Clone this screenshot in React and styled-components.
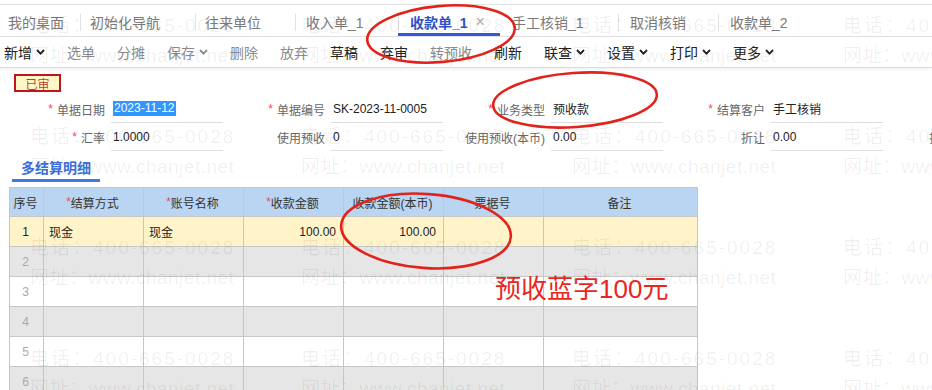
import React from 'react';
import styled, { createGlobalStyle } from 'styled-components';

const FONT = `"Liberation Sans", "Noto Sans CJK SC", sans-serif`;

const GlobalStyle = createGlobalStyle`
  html, body { margin: 0; padding: 0; background: #fff; }
  body { font-family: ${FONT}; overflow: hidden; }
  * { box-sizing: border-box; }
`;

const Page = styled.div`
  position: relative;
  width: 932px;
  height: 390px;
  overflow: hidden;
  background: #fff;
`;

const TabBar = styled.div`
  display: flex;
  margin-top: 4px;
  height: 33px;
  border-top: 1px solid #e3e3e3;
  border-bottom: 1px solid #e3e3e3;
`;

const Tab = styled.div`
  position: relative;
  flex: 0 0 ${(p) => p.$w}px;
  height: 31px;
  padding: 5px 0 0 ${(p) => p.$pad}px;
  display: flex;
  align-items: center;
  gap: 8px;
  font-size: 14px;
  white-space: nowrap;
  color: ${(p) => (p.$active ? '#2f52c8' : '#7a7a7a')};
  font-weight: ${(p) => (p.$active ? 'bold' : 'normal')};
  border-bottom: 3px solid ${(p) => (p.$active ? '#3a58d6' : 'transparent')};
  &::before {
    content: '';
    display: ${(p) => (p.$sep ? 'block' : 'none')};
    position: absolute;
    left: 0;
    top: 9px;
    width: 1px;
    height: 17px;
    background: #e2e2e2;
  }
`;

const Close = styled.span`
  font-size: 16px;
  font-weight: normal;
  color: #aaa;
`;

const Toolbar = styled.div`
  display: flex;
  align-items: center;
  gap: 22px;
  height: 31px;
  padding-left: 4px;
  border-bottom: 1px solid #dcdcdc;
  box-shadow: 0 1px 3px rgba(0, 0, 0, 0.08);
`;

const ToolItem = styled.div`
  display: flex;
  align-items: center;
  gap: 4px;
  font-size: 14px;
  white-space: nowrap;
  color: ${(p) => (p.$disabled ? '#8a8a8a' : '#222')};
`;

const Chevron = () => (
  <svg width="9" height="6" viewBox="0 0 9 6">
    <polyline points="1,1 4.5,4.6 8,1" fill="none" stroke="currentColor" strokeWidth="1.8" />
  </svg>
);

const Badge = styled.div`
  margin: 6px 0 0 14px;
  width: 47px;
  height: 18px;
  border: 2px solid #c2141b;
  background: #fff7c8;
  color: #b8432f;
  font-size: 12px;
  display: flex;
  align-items: center;
  justify-content: center;
`;

const Form = styled.div`
  margin-top: 3px;
  display: flex;
  flex-direction: column;
`;

const FormRow = styled.div`
  display: flex;
  height: 28px;
  padding-left: 3px;
`;

const Field = styled.div`
  flex: 0 0 220px;
  display: flex;
`;

const Label = styled.div`
  flex: 0 0 102px;
  display: flex;
  align-items: center;
  justify-content: flex-end;
  font-size: 12px;
  color: #666;
  white-space: nowrap;
`;

const Star = styled.span`
  color: #e5505a;
  margin-right: 4px;
`;

const Value = styled.div`
  flex: 0 0 112px;
  margin-left: 6px;
  padding-left: 2px;
  display: flex;
  align-items: center;
  border-bottom: 1px solid #dedede;
  font-size: 12px;
  color: #222;
  white-space: nowrap;
`;

const Selected = styled.span`
  background: #3196fd;
  color: #fff;
  line-height: 15px;
  padding: 0 1px;
`;

const SectionTab = styled.div`
  margin: 6px 0 0 12px;
  width: 88px;
  height: 25px;
  line-height: 22px;
  text-align: center;
  font-size: 14px;
  font-weight: bold;
  color: #3b6fd6;
  border-bottom: 3px solid #3d7be0;
`;

const Table = styled.div`
  margin: 5px 0 0 9px;
  width: 689px;
  border-left: 1px solid #c6c6c6;
  border-top: 1px solid #c6c6c6;
`;

const Row = styled.div`
  display: grid;
  grid-template-columns: 34px 100px 100px 100px 100px 100px 154px;
  height: ${(p) => (p.$head ? 29 : 30)}px;
  background: ${(p) => p.$bg};
`;

const Cell = styled.div`
  border-right: 1px solid #c6c6c6;
  border-bottom: 1px solid #c6c6c6;
  display: flex;
  align-items: center;
  justify-content: ${(p) => p.$align || 'flex-start'};
  padding: 0 7px 0 5px;
  font-size: 12px;
  white-space: nowrap;
  color: ${(p) => p.$color || '#222'};
`;

const HeadStar = styled.span`
  color: #e5505a;
`;

const Watermark = styled.div`
  position: absolute;
  inset: 0;
  pointer-events: none;
  z-index: 5;
  display: grid;
  grid-template-columns: repeat(4, 271px);
  grid-auto-rows: 111px;
  padding: 11px 0 0 30px;
`;

const Mark = styled.div`
  display: flex;
  flex-direction: column;
  color: rgba(0, 0, 0, 0.065);
  font-size: 19px;
  line-height: 30px;
  white-space: nowrap;
`;

const Phone = styled.span`
  letter-spacing: 2px;
`;

const Url = styled.span`
  letter-spacing: 0.5px;
`;

const Annotation = styled.svg`
  position: absolute;
  left: 0;
  top: 0;
  z-index: 10;
  pointer-events: none;
`;

const Note = styled.div`
  position: absolute;
  left: 495px;
  top: 275px;
  z-index: 10;
  font-size: 26px;
  line-height: 28px;
  color: #e8261d;
  white-space: nowrap;
`;

const tabs = [
  { label: '我的桌面', w: 80, pad: 8 },
  { label: '初始化导航', w: 115, sep: true, pad: 10 },
  { label: '往来单位', w: 100, sep: true, pad: 10 },
  { label: '收入单_1', w: 103, sep: true, pad: 11 },
  { label: '收款单_1', w: 102, sep: true, active: true, pad: 12 },
  { label: '手工核销_1', w: 118, pad: 12 },
  { label: '取消核销', w: 100, sep: true, pad: 12 },
  { label: '收款单_2', w: 100, sep: true, pad: 12 },
];

const tools = [
  { label: '新增', menu: true },
  { label: '选单', disabled: true },
  { label: '分摊', disabled: true },
  { label: '保存', disabled: true, menu: true },
  { label: '删除', disabled: true },
  { label: '放弃', disabled: true },
  { label: '草稿' },
  { label: '弃审' },
  { label: '转预收', disabled: true },
  { label: '刷新' },
  { label: '联查', menu: true },
  { label: '设置', menu: true },
  { label: '打印', menu: true },
  { label: '更多', menu: true },
];

const row1 = [
  { label: '单据日期', req: true, value: <Selected>2023-11-12</Selected> },
  { label: '单据编号', req: true, value: 'SK-2023-11-0005' },
  { label: '业务类型', req: true, value: '预收款' },
  { label: '结算客户', req: true, value: '手工核销' },
];

const row2 = [
  { label: '汇率', req: true, value: '1.0000' },
  { label: '使用预收', value: '0' },
  { label: '使用预收(本币)', value: '0.00' },
  { label: '折让', value: '0.00' },
  { label: '折让(本币)', value: '0.00' },
];

const headers = [
  { t: '序号' },
  { t: '结算方式', req: true },
  { t: '账号名称', req: true },
  { t: '收款金额', req: true },
  { t: '收款金额(本币)' },
  { t: '票据号' },
  { t: '备注' },
];

const rowBg = (i) => (i === 0 ? '#fff4c9' : i % 2 === 1 ? '#e6e6e6' : '#ffffff');

function FormLine({ fields }) {
  return (
    <FormRow>
      {fields.map((f) => (
        <Field key={f.label}>
          <Label>
            {f.req && <Star>*</Star>}
            {f.label}
          </Label>
          <Value>{f.value}</Value>
        </Field>
      ))}
    </FormRow>
  );
}

export default function App() {
  const marks = Array.from({ length: 16 });
  const dataRows = Array.from({ length: 7 });
  return (
    <Page>
      <GlobalStyle />
      <TabBar>
        {tabs.map((t) => (
          <Tab key={t.label} $w={t.w} $pad={t.pad} $sep={t.sep} $active={t.active}>
            {t.label}
            {t.active && <Close>×</Close>}
          </Tab>
        ))}
      </TabBar>
      <Toolbar>
        {tools.map((t) => (
          <ToolItem key={t.label} $disabled={t.disabled}>
            {t.label}
            {t.menu && <Chevron />}
          </ToolItem>
        ))}
      </Toolbar>
      <Badge>已审</Badge>
      <Form>
        <FormLine fields={row1} />
        <FormLine fields={row2} />
      </Form>
      <SectionTab>多结算明细</SectionTab>
      <Table>
        <Row $head $bg="#bad5f2">
          {headers.map((h) => (
            <Cell key={h.t} $align="center" $color="#333">
              {h.req && <HeadStar>*</HeadStar>}
              {h.t}
            </Cell>
          ))}
        </Row>
        {dataRows.map((_, i) => (
          <Row key={i} $bg={rowBg(i)}>
            <Cell $align="center" $color={i === 0 ? '#222' : '#aaa'}>{i + 1}</Cell>
            <Cell>{i === 0 ? '现金' : ''}</Cell>
            <Cell>{i === 0 ? '现金' : ''}</Cell>
            <Cell $align="flex-end">{i === 0 ? '100.00' : ''}</Cell>
            <Cell $align="flex-end">{i === 0 ? '100.00' : ''}</Cell>
            <Cell />
            <Cell />
          </Row>
        ))}
      </Table>
      <Watermark>
        {marks.map((_, i) => (
          <Mark key={i}>
            <Phone>电话：400-665-0028</Phone>
            <Url>网址：www.chanjet.net</Url>
          </Mark>
        ))}
      </Watermark>
      <Annotation width="932" height="390" viewBox="0 0 932 390">
        <g fill="none" stroke="#e2231b" strokeWidth="2.6">
          <ellipse cx="441" cy="34" rx="74" ry="28" transform="rotate(-5 441 34)" />
          <ellipse cx="575" cy="100" rx="82" ry="27" transform="rotate(-4 575 100)" />
          <ellipse cx="426" cy="231" rx="85" ry="37" transform="rotate(4 426 231)" />
        </g>
      </Annotation>
      <Note>预收蓝字100元</Note>
    </Page>
  );
}
